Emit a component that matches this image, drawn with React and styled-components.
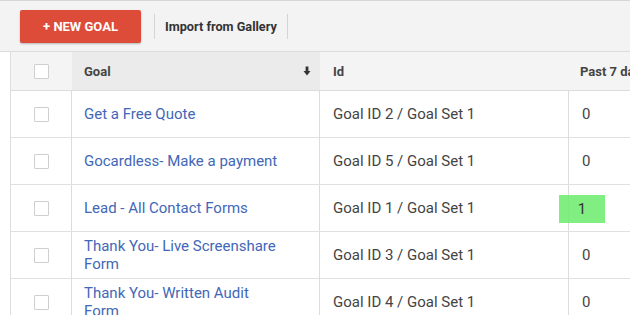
import React from 'react'
import styled, { createGlobalStyle } from 'styled-components'

const GlobalStyle = createGlobalStyle`
  html, body {
    margin: 0;
    padding: 0;
    background: #fff;
    overflow: hidden;
  }
  body {
    font-family: Roboto, "Liberation Sans", Arial, sans-serif;
    -webkit-font-smoothing: antialiased;
  }
`

const goals = [
  { name: 'Get a Free Quote', id: 'Goal ID 2 / Goal Set 1', past: 0 },
  { name: 'Gocardless- Make a payment', id: 'Goal ID 5 / Goal Set 1', past: 0 },
  { name: 'Lead - All Contact Forms', id: 'Goal ID 1 / Goal Set 1', past: 1, hot: true },
  { name: 'Thank You- Live Screenshare\nForm', id: 'Goal ID 3 / Goal Set 1', past: 0 },
  { name: 'Thank You- Written Audit\nForm', id: 'Goal ID 4 / Goal Set 1', past: 0 },
]

const SortArrow = () => (
  <svg width="8" height="10" viewBox="0 0 8 10">
    <rect x="2.6" y="0.5" width="2.8" height="5" fill="#333" />
    <polygon points="0.5,5 7.5,5 4,9.5" fill="#333" />
  </svg>
)

const App = () => {
  return (
    <Page>
      <GlobalStyle />
      <Toolbar>
        <NewButton type="button">+ NEW GOAL</NewButton>
        <Divider />
        <ImportLink>Import from Gallery</ImportLink>
        <Divider />
      </Toolbar>

      <Table>
        <HeadCell>
          <Check />
        </HeadCell>
        <HeadCell sorted>
          Goal
          <SortArrow />
        </HeadCell>
        <HeadCell>Id</HeadCell>
        <HeadCell past>Past 7 days</HeadCell>

        {goals.map((g) => (
          <React.Fragment key={g.id}>
            <Cell center ruled>
              <Check />
            </Cell>
            <Cell ruled>
              <GoalLink>{g.name}</GoalLink>
            </Cell>
            <Cell ruled>{g.id}</Cell>
            <Cell>
              {g.hot ? <Highlight>{g.past}</Highlight> : g.past}
            </Cell>
          </React.Fragment>
        ))}
      </Table>
    </Page>
  )
}

const Page = styled.div`
  width: 630px;
  height: 315px;
  overflow: hidden;
`

const Toolbar = styled.div`
  height: 50px;
  display: flex;
  align-items: center;
  gap: 12px;
  padding-left: 20px;
  background: #f3f3f3;
  border-top: 1px solid #d6d6d6;
  border-bottom: 1px solid #dcdcdc;
`

const NewButton = styled.button`
  width: 121px;
  height: 33px;
  margin-right: 1px;
  border: none;
  border-radius: 2px;
  background: #dd4b39;
  color: #fff;
  font-family: Roboto, "Liberation Sans", Arial, sans-serif;
  font-weight: 700;
  font-size: 13px;
  box-shadow: 0 1px 2px rgba(0, 0, 0, 0.25);
  margin-top: 1px;
`

const Divider = styled.span`
  width: 1px;
  height: 25px;
  background: #d4d4d4;
`

const ImportLink = styled.span`
  font-size: 12.7px;
  font-weight: 700;
  color: #333;
  margin-left: -2px;
  margin-right: -2px;
`

const Table = styled.div`
  margin-left: 10px;
  border-left: 1px solid #ddd;
  display: grid;
  grid-template-columns: 61px 248px 249px 1fr;
  grid-template-rows: 39px;
  grid-auto-rows: 47px;
`

const HeadCell = styled.div`
  display: flex;
  align-items: center;
  justify-content: ${(p) => (p.sorted ? 'space-between' : 'flex-start')};
  padding: 0 ${(p) => (p.sorted ? '9px' : '13px')} 0 ${(p) => (p.sorted ? '12px' : p.past ? '11px' : '13px')};
  background: ${(p) => (p.sorted ? '#ebebeb' : '#f4f4f4')};
  border-bottom: 1px solid #dcdcdc;
  font-size: 13px;
  font-weight: 700;
  color: #444;
  white-space: nowrap;
  overflow: hidden;

  &:first-child {
    justify-content: center;
    padding: 0;
  }
`

const Cell = styled.div`
  display: flex;
  align-items: center;
  justify-content: ${(p) => (p.center ? 'center' : 'flex-start')};
  padding: ${(p) => (p.center ? '0' : '0 13px')};
  border-bottom: 1px solid #e0e0e0;
  border-right: ${(p) => (p.ruled ? '1px solid #dcdcdc' : 'none')};
  font-size: 15px;
  color: #444;
  white-space: nowrap;
`

const Check = styled.span`
  width: 13px;
  height: 13px;
  border: 1px solid #cfcfcf;
  border-radius: 1px;
  background: #fff;
`

const GoalLink = styled.span`
  color: #4267b7;
  line-height: 18px;
  white-space: pre-line;
  margin-left: -1px;
`

const Highlight = styled.span`
  display: inline-flex;
  align-items: center;
  justify-content: center;
  width: 46px;
  height: 28px;
  margin-left: -23px;
  margin-top: 2px;
  background: rgba(110, 236, 110, 0.88);
  color: #333;
`

export default App
